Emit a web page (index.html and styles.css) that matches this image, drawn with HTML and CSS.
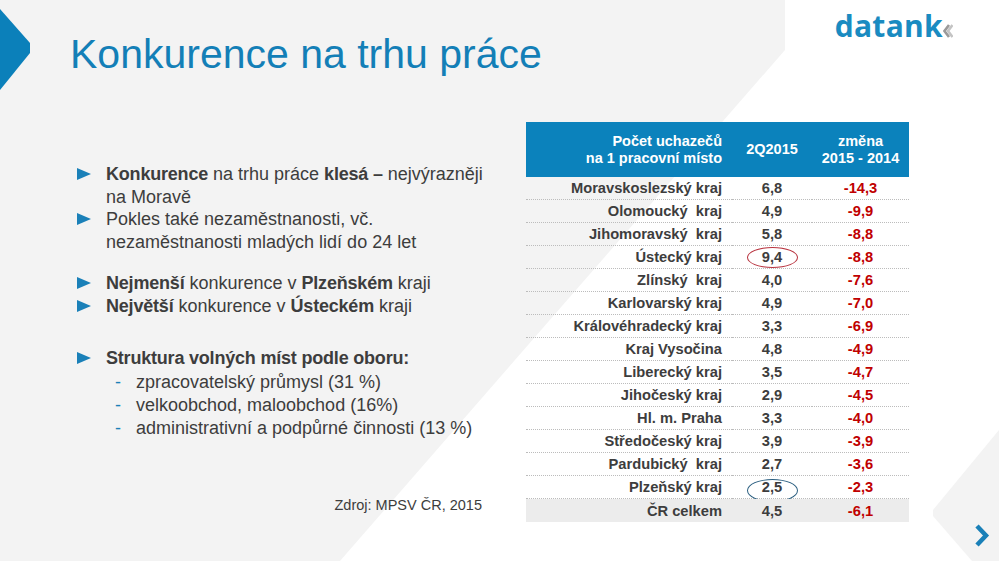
FILE: index.html
```html
<!DOCTYPE html>
<html lang="cs">
<head>
<meta charset="utf-8">
<title>Konkurence na trhu práce</title>
<link rel="stylesheet" href="styles.css">
</head>
<body>
<div class="slide">
  <svg class="backdrop" width="999" height="561" viewBox="0 0 999 561" aria-hidden="true">
    <polygon class="shade" points="0,0 785,0 785,50 340,561 0,561"/>
    <polygon class="shade" points="999,430 933,510 933,516 972,561 999,561"/>
    <polygon class="tab" points="0,9 30,43 30,53 0,90"/>
    <polyline class="next" points="977,526 986,535.5 977,545"/>
  </svg>

  <header class="top">
    <h1 class="title">Konkurence na trhu práce</h1>
    <div class="logo">
      <span class="logo-word">datank</span>
      <svg class="logo-mark" width="10" height="14" viewBox="0 0 10 14" aria-hidden="true">
        <polyline class="mark-a" points="6,1 1.5,7 6,13"/>
        <polyline class="mark-b" points="9.5,1 5,7 9.5,13"/>
      </svg>
    </div>
  </header>

  <main class="content">
    <section class="points">
      <ul class="bullets">
        <li><b>Konkurence</b> na trhu práce <b>klesá –</b> nejvýrazněji<br>na Moravě</li>
        <li>Pokles také nezaměstnanosti, vč.<br>nezaměstnanosti mladých lidí do 24 let</li>
        <li class="gap"><b>Nejmenší</b> konkurence v <b>Plzeňském</b> kraji</li>
        <li><b>Největší</b> konkurence v <b>Ústeckém</b> kraji</li>
        <li class="gap-lg"><b>Struktura volných míst podle oboru:</b>
          <ul class="sub">
            <li>zpracovatelský průmysl (31 %)</li>
            <li>velkoobchod, maloobchod (16%)</li>
            <li>administrativní a podpůrné činnosti (13 %)</li>
          </ul>
        </li>
      </ul>
      <p class="source">Zdroj: MPSV ČR, 2015</p>
    </section>

    <section class="data">
      <table class="grid">
        <colgroup>
          <col class="c-name"><col class="c-val"><col class="c-chg">
        </colgroup>
        <thead>
          <tr>
            <th class="name">Počet uchazečů<br>na 1 pracovní místo</th>
            <th>2Q2015</th>
            <th>změna<br>2015 - 2014</th>
          </tr>
        </thead>
        <tbody>
          <tr><td class="name">Moravskoslezský kraj</td><td class="val">6,8</td><td class="chg">-14,3</td></tr>
          <tr><td class="name">Olomoucký&nbsp; kraj</td><td class="val">4,9</td><td class="chg">-9,9</td></tr>
          <tr><td class="name">Jihomoravský&nbsp; kraj</td><td class="val">5,8</td><td class="chg">-8,8</td></tr>
          <tr><td class="name">Ústecký kraj</td><td class="val"><span class="ring ring-red"></span>9,4</td><td class="chg">-8,8</td></tr>
          <tr><td class="name">Zlínský&nbsp; kraj</td><td class="val">4,0</td><td class="chg">-7,6</td></tr>
          <tr><td class="name">Karlovarský kraj</td><td class="val">4,9</td><td class="chg">-7,0</td></tr>
          <tr><td class="name">Královéhradecký kraj</td><td class="val">3,3</td><td class="chg">-6,9</td></tr>
          <tr><td class="name">Kraj Vysočina</td><td class="val">4,8</td><td class="chg">-4,9</td></tr>
          <tr><td class="name">Liberecký kraj</td><td class="val">3,5</td><td class="chg">-4,7</td></tr>
          <tr><td class="name">Jihočeský kraj</td><td class="val">2,9</td><td class="chg">-4,5</td></tr>
          <tr><td class="name">Hl. m. Praha</td><td class="val">3,3</td><td class="chg">-4,0</td></tr>
          <tr><td class="name">Středočeský kraj</td><td class="val">3,9</td><td class="chg">-3,9</td></tr>
          <tr><td class="name">Pardubický&nbsp; kraj</td><td class="val">2,7</td><td class="chg">-3,6</td></tr>
          <tr><td class="name">Plzeňský kraj</td><td class="val"><span class="ring ring-blue"></span>2,5</td><td class="chg">-2,3</td></tr>
          <tr class="total"><td class="name">ČR celkem</td><td class="val">4,5</td><td class="chg">-6,1</td></tr>
        </tbody>
      </table>
    </section>
  </main>
</div>
</body>
</html>
```

FILE: styles.css
```css
html, body {
  margin: 0;
  padding: 0;
  background: #ffffff;
}

.slide {
  position: relative;
  width: 999px;
  height: 561px;
  overflow: hidden;
  font-family: "Liberation Sans", Arial, sans-serif;
  color: #3d3d3d;
}

.backdrop {
  position: absolute;
  left: 0;
  top: 0;
  z-index: 0;
}

.shade { fill: #f3f3f3; }
.tab { fill: #0b80ba; }
.next {
  fill: none;
  stroke: #1a80b8;
  stroke-width: 4.5;
}

.top {
  position: relative;
  z-index: 1;
  height: 122px;
  display: flex;
  justify-content: space-between;
  align-items: flex-start;
}

.title {
  margin: 0;
  padding: 30px 0 0 70px;
  font-size: 41px;
  line-height: 48px;
  font-weight: normal;
  color: #137fb7;
}

.logo {
  display: flex;
  align-items: flex-end;
  padding: 10px 46px 0 0;
}

.logo-word {
  font-family: "Open Sans", sans-serif;
  font-weight: 700;
  font-size: 30px;
  line-height: 32px;
  letter-spacing: 0.3px;
  color: #1a8bc1;
}

.logo-mark {
  margin: 0 0 4px 0;
}

.mark-a, .mark-b {
  fill: none;
  stroke-width: 2.6;
}
.mark-a { stroke: #9a9a9a; }
.mark-b { stroke: #c4c4c4; }

.content {
  position: relative;
  z-index: 1;
  display: grid;
  grid-template-columns: 526px 383px;
}

.points {
  padding: 41px 0 0 77px;
}

.bullets {
  list-style: none;
  margin: 0;
  padding: 0;
  font-size: 18px;
  line-height: 22.5px;
}

.bullets > li {
  position: relative;
  padding-left: 29px;
}

.bullets > li::before {
  content: "";
  position: absolute;
  left: 0;
  top: 5px;
  width: 0;
  height: 0;
  border-top: 6.5px solid transparent;
  border-bottom: 6.5px solid transparent;
  border-left: 14px solid #1a80b8;
}

.bullets b {
  font-weight: bold;
  letter-spacing: -0.2px;
}

.bullets > li.gap { margin-top: 19px; }
.bullets > li.gap-lg { margin-top: 30px; }

.sub {
  list-style: none;
  margin: 1.5px 0 0 0;
  padding: 0;
  line-height: 23px;
}

.sub li {
  position: relative;
  padding-left: 30px;
}

.sub li::before {
  content: "-";
  position: absolute;
  left: 9px;
  top: 0;
  color: #1a80b8;
}

.source {
  margin: 56px 44px 0 0;
  text-align: right;
  font-size: 14.5px;
  line-height: 18px;
}

.grid {
  border-collapse: collapse;
  border-spacing: 0;
  width: 383px;
  table-layout: fixed;
  font-weight: bold;
}

.c-name { width: 206px; }
.c-val { width: 80px; }
.c-chg { width: 97px; }

.grid thead th {
  background: #0b82bc;
  color: #ffffff;
  height: 55px;
  padding: 0;
  font-size: 14.5px;
  line-height: 17px;
  text-align: center;
  vertical-align: middle;
}

.grid thead th.name {
  text-align: right;
  padding-right: 10px;
}

.grid tbody td {
  height: 22px;
  padding: 0;
  font-size: 14.7px;
  line-height: 22px;
  border-bottom: 1px dotted #bcbcbc;
  vertical-align: middle;
  color: #3d3d3d;
}

.grid td.name {
  text-align: right;
  padding-right: 10px;
}

.grid td.val {
  position: relative;
  text-align: center;
}

.grid td.chg {
  text-align: center;
  color: #c00000;
}

.grid tr.total td {
  background: #ececec;
  border-bottom: none;
  height: 23px;
}

.ring {
  position: absolute;
  left: 15px;
  width: 51px;
  border-radius: 50%;
  box-sizing: border-box;
}

.ring-red {
  top: 1px;
  height: 21px;
  border: 1.5px solid #b8323e;
}

.ring-blue {
  top: 3px;
  height: 23px;
  border: 1.5px solid #2b5f80;
}
```
